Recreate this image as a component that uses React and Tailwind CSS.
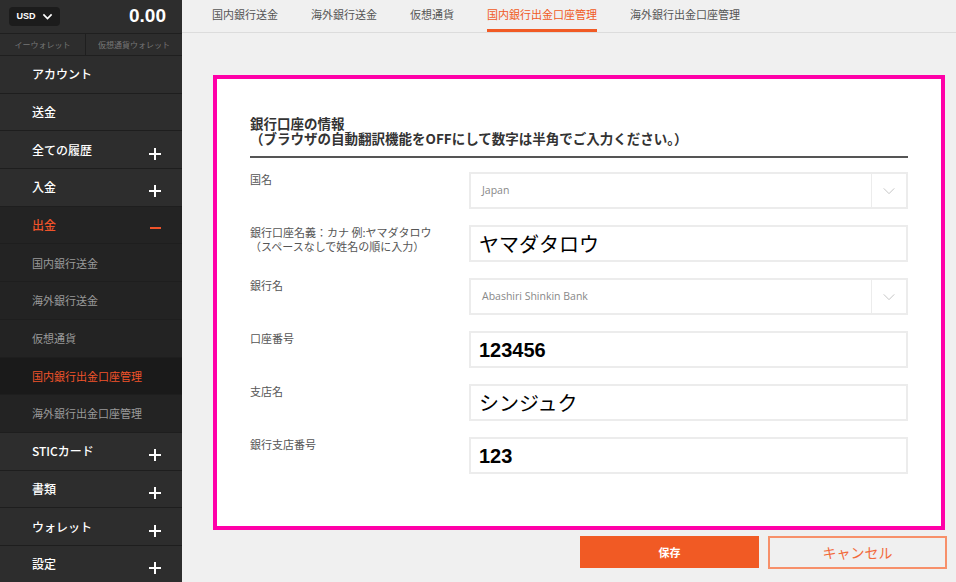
import React from "react";

const jp = { fontFamily: '"Noto Sans CJK JP", "Noto Sans", sans-serif' };
const latin = { fontFamily: '"Open Sans", "Noto Sans CJK JP", sans-serif' };
const arial = { fontFamily: '"Liberation Sans", "Noto Sans CJK JP", sans-serif' };

const menu = [
  { label: "アカウント" },
  { label: "送金" },
  { label: "全ての履歴", plus: true },
  { label: "入金", plus: true },
  { label: "出金", open: true },
  { label: "国内銀行送金", sub: true },
  { label: "海外銀行送金", sub: true },
  { label: "仮想通貨", sub: true },
  { label: "国内銀行出金口座管理", sub: true, active: true },
  { label: "海外銀行出金口座管理", sub: true },
  { label: "STICカード", plus: true },
  { label: "書類", plus: true },
  { label: "ウォレット", plus: true },
  { label: "設定", plus: true },
];

const tabs = [
  "国内銀行送金",
  "海外銀行送金",
  "仮想通貨",
  "国内銀行出金口座管理",
  "海外銀行出金口座管理",
];

function Plus() {
  return (
    <svg width="12" height="12" viewBox="0 0 12 12" className="mt-[8px]">
      <path d="M6 0v12M0 6h12" stroke="#fff" strokeWidth="2" />
    </svg>
  );
}

function Chevron({ size = 14, color = "#bbb", width = 1 }) {
  return (
    <svg width={size} height={size} viewBox="0 0 16 16" fill="none">
      <path d="M2 5l6 6 6-6" stroke={color} strokeWidth={width} />
    </svg>
  );
}

function Sidebar() {
  return (
    <aside className="w-[182px] shrink-0 bg-[#2d2d2d] flex flex-col overflow-hidden">
      <div className="h-[33px] shrink-0 flex items-center justify-between pl-[9px] pr-[16px]">
        <div className="h-[19px] w-[51px] rounded-[4px] bg-[#1c1c1c] flex items-center justify-center gap-[6px]">
          <span className="text-[9px] font-black text-white" style={arial}>USD</span>
          <Chevron size={11} color="#fff" width={2.4} />
        </div>
        <span className="text-[19px] text-white font-semibold" style={arial}>0.00</span>
      </div>
      <div className="h-[23px] shrink-0 flex border-y border-[#1f1f1f] text-[8px] text-[#777]" style={jp}>
        <div className="w-[86px] flex items-center justify-center border-r border-[#1f1f1f]">イーウォレット</div>
        <div className="flex-1 flex items-center justify-center">仮想通貨ウォレット</div>
      </div>
      <nav className="flex flex-col shrink-0" style={jp}>
        {menu.map((m) => (
          <div
            key={m.label}
            className={
              "h-[37.7px] shrink-0 flex items-center justify-between pl-[32px] pr-[21px] border-b border-[#1e1e1e] " +
              (m.active ? "bg-[#1a1a1a]" : m.sub || m.open ? "bg-[#232323]" : "")
            }
          >
            <span
              className={
                m.sub
                  ? "text-[11px] " + (m.active ? "text-[#f0532a]" : "text-[#9a9a9a]")
                  : "text-[12px] font-medium " + (m.open ? "text-[#f0532a]" : "text-white")
              }
            >
              {m.label}
            </span>
            {m.plus && <Plus />}
            {m.open && <span className="mt-[6px] block h-[2px] w-[11px] bg-[#f0532a]" />}
          </div>
        ))}
      </nav>
    </aside>
  );
}

function Field({ label, children }) {
  return (
    <div className="flex">
      <div className="w-[219px] text-[11px] leading-[14px] text-[#555]" style={jp}>
        {label}
      </div>
      <div className="flex-1">{children}</div>
    </div>
  );
}

function Select({ value }) {
  return (
    <div className="h-[37px] border-2 border-[#ececec] flex items-center">
      <span className="flex-1 pl-[11px] text-[10.5px] text-[#888]" style={latin}>{value}</span>
      <div className="w-[35px] h-full border-l border-[#ececec] flex items-center justify-center">
        <Chevron />
      </div>
    </div>
  );
}

function Input({ value, bold }) {
  return (
    <div className="h-[37px] border-2 border-[#ececec] flex items-center pl-[8px]">
      <span
        className={"text-[20px] text-black " + (bold ? "font-bold" : "")}
        style={bold ? arial : jp}
      >
        {value}
      </span>
    </div>
  );
}

export default function App() {
  return (
    <div className="w-[956px] h-[582px] flex overflow-hidden">
      <Sidebar />
      <main className="flex-1 bg-[#f0f0f0] flex flex-col">
        <div className="h-[33px] shrink-0 border-b border-[#dcdcdc] flex pl-[30px] gap-[33px] text-[11px] text-[#555]" style={jp}>
          {tabs.map((t, i) => (
            <div
              key={t}
              className={
                "h-full flex items-center border-b-[3px] " +
                (i === 3 ? "border-[#f15a24] text-[#f15a24]" : "border-transparent")
              }
            >
              {t}
            </div>
          ))}
        </div>
        <div className="pl-[31px] pr-[9px] pt-[42px]">
          <div className="w-[732px] h-[455px] border-4 border-[#ff00a8] bg-white px-[33px] pt-[37px]">
            <div className="text-[13.5px] leading-[15px] font-semibold text-[#333]" style={jp}>
              <div>銀行口座の情報</div>
              <div>（ブラウザの自動翻訳機能をOFFにして数字は半角でご入力ください。）</div>
            </div>
            <div className="mt-[10px] h-[2px] bg-[#555]" />
            <div className="mt-[14px] flex flex-col gap-[16px]">
              <Field label="国名">
                <Select value="Japan" />
              </Field>
              <Field
                label={
                  <>
                    <div>銀行口座名義：カナ 例:ヤマダタロウ</div>
                    <div>（スペースなしで姓名の順に入力）</div>
                  </>
                }
              >
                <Input value="ヤマダタロウ" />
              </Field>
              <Field label="銀行名">
                <Select value="Abashiri Shinkin Bank" />
              </Field>
              <Field label="口座番号">
                <Input value="123456" bold />
              </Field>
              <Field label="支店名">
                <Input value="シンジュク" />
              </Field>
              <Field label="銀行支店番号">
                <Input value="123" bold />
              </Field>
            </div>
          </div>
          <div className="mt-[6px] flex justify-end gap-[9px]" style={jp}>
            <button className="w-[179px] h-[32px] bg-[#f15a24] text-white text-[11px] font-bold">
              保存
            </button>
            <button className="w-[179px] h-[33px] border-2 border-[#f7906a] text-[#f26a3a] text-[14px]">
              キャンセル
            </button>
          </div>
        </div>
      </main>
    </div>
  );
}
